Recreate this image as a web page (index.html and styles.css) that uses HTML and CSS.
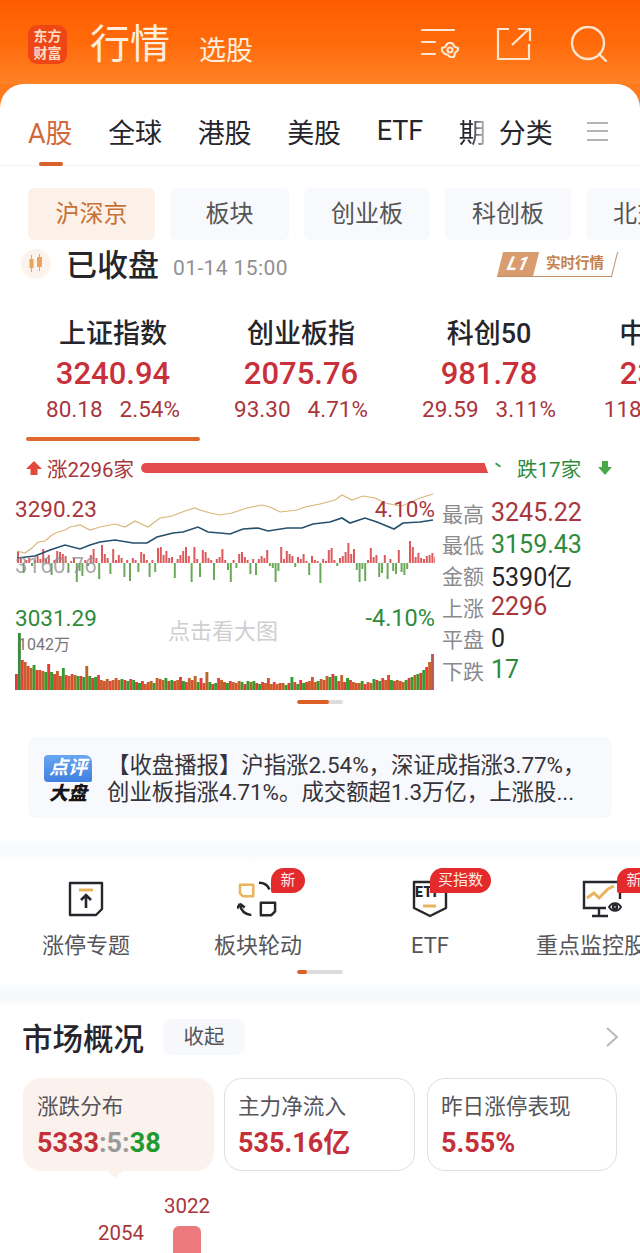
FILE: index.html
```html
<!DOCTYPE html>
<html lang="zh-CN">
<head>
    <meta charset="UTF-8">
    <meta name="viewport" content="width=device-width, initial-scale=1.0">
    <title>行情</title>
    <link rel="stylesheet" href="styles.css">
</head>
<body>
    <header class="topbar">
        <div class="logo">东方<br>财富</div>
        <h1 class="title">行情</h1>
        <span class="title-sub">选股</span>
        <div class="top-icons">
            <svg class="icon-filter" width="40" height="34" viewBox="0 0 40 34" fill="none" stroke="#fde6cf" stroke-width="2.2" stroke-linecap="round">
                <path d="M2 3h32M2 15h13M2 27h13"/>
                <path d="M22 21l3-1 3-4h4l3 4 3 1v2l-3 3-1 4h-4l-2-2-3-1-3-3z" stroke-linejoin="round"/>
                <circle cx="30" cy="23" r="2.5"/>
            </svg>
            <svg class="icon-share" width="36" height="34" viewBox="0 0 36 34" fill="none" stroke="#fde6cf" stroke-width="2.2">
                <path d="M13 2H2v30h31V17"/>
                <path d="M16 18L33 2M22 2h12v12"/>
            </svg>
            <svg class="icon-search" width="38" height="36" viewBox="0 0 38 36" fill="none" stroke="#fde6cf" stroke-width="2.4" stroke-linecap="round">
                <circle cx="18" cy="17" r="16"/>
                <path d="M29 28l7 7"/>
            </svg>
        </div>
    </header>

    <main class="panel">
        <nav class="tabs">
            <a class="tab tab-on">A股</a>
            <a class="tab">全球</a>
            <a class="tab">港股</a>
            <a class="tab">美股</a>
            <a class="tab">ETF</a>
            <a class="tab tab-fade">期</a>
            <a class="tab tab-more">分类</a>
            <span class="tab-menu"></span>
        </nav>

        <div class="subtabs">
            <a class="subtab subtab-on">沪深京</a>
            <a class="subtab subtab-short">板块</a>
            <a class="subtab">创业板</a>
            <a class="subtab">科创板</a>
            <a class="subtab">北交所</a>
        </div>

        <div class="status">
            <span class="status-icon">
                <svg width="20" height="20" viewBox="0 0 20 20" fill="#e9a35a">
                    <path d="M5 1h1v4h1.500v9H6v4H5v-4H3.500V5H5zM13 0h1v3h2v10h-2v4h-1v-4h-2V3h2z"/>
                </svg>
            </span>
            <span class="status-text">已收盘</span>
            <span class="status-time">01-14 15:00</span>
            <span class="l1-badge"><b class="l1-tag"><i>L1</i></b><span class="l1-text"><i>实时行情</i></span></span>
        </div>

        <div class="indexes">
            <div class="index index-on">
                <div class="index-name">上证指数</div>
                <div class="index-value">3240.94</div>
                <div class="index-change"><span>80.18</span><span>2.54%</span></div>
            </div>
            <div class="index">
                <div class="index-name">创业板指</div>
                <div class="index-value">2075.76</div>
                <div class="index-change"><span>93.30</span><span>4.71%</span></div>
            </div>
            <div class="index">
                <div class="index-name">科创50</div>
                <div class="index-value">981.78</div>
                <div class="index-change"><span>29.59</span><span>3.11%</span></div>
            </div>
            <div class="index">
                <div class="index-name">中证2000</div>
                <div class="index-value">2301.45</div>
                <div class="index-change"><span>118.20</span><span>5.41%</span></div>
            </div>
        </div>
        <div class="index-line"></div>

        <div class="breadth">
            <svg width="16" height="16" viewBox="0 0 16 16" fill="#e5483f"><path d="M8 1l8 8h-4.500v6h-7V9H0z"/></svg>
            <span class="up">涨2296家</span>
            <span class="breadth-bar"></span>
            <span class="breadth-tick"></span>
            <span class="down">跌17家</span>
            <svg width="14" height="16" viewBox="0 0 14 16" fill="#4aa84a"><path d="M4 1h6v6h4l-7 8-7-8h4z"/></svg>
        </div>

        <section class="overview">
            <div class="chart">
                <svg id="chart-svg" width="420" height="200" viewBox="0 0 420 200"></svg>
                <span class="chart-label top-left up">3290.23</span>
                <span class="chart-label top-right up">4.10%</span>
                <span class="chart-label mid-left">3160.76</span>
                <span class="chart-label low-left down">3031.29</span>
                <span class="chart-label low-right down">-4.10%</span>
                <span class="chart-hint">点击看大图</span>
                <span class="chart-vol">1042万</span>
            </div>
            <dl class="stats">
                <div class="stat"><dt>最高</dt><dd class="up">3245.22</dd></div>
                <div class="stat"><dt>最低</dt><dd class="down">3159.43</dd></div>
                <div class="stat"><dt>金额</dt><dd>5390亿</dd></div>
                <div class="stat"><dt>上涨</dt><dd class="up">2296</dd></div>
                <div class="stat"><dt>平盘</dt><dd>0</dd></div>
                <div class="stat"><dt>下跌</dt><dd class="down">17</dd></div>
            </dl>
        </section>
        <div class="pager"><span class="pager-fill pager-long"></span></div>

        <div class="news">
            <div class="news-logo">
                <span class="news-logo-top">点评</span>
                <span class="news-logo-bottom">大盘</span>
            </div>
            <p class="news-text">【收盘播报】沪指涨2.54%，深证成指涨3.77%，<br>创业板指涨4.71%。成交额超1.3万亿，上涨股...</p>
        </div>

        <div class="band"></div>

        <section class="shortcuts">
            <div class="shortcut-row">
                <div class="shortcut">
                    <svg width="36" height="36" viewBox="0 0 36 36" fill="none" stroke="#26262c" stroke-width="2.400">
                        <path d="M2 2h32v26l-6 6H2z" stroke-linejoin="round"/>
                        <path d="M11 9h14" stroke="#e9b45c" stroke-width="3"/>
                        <path d="M18 27V15M13 19l5-5 5 5" stroke-width="2.600"/>
                    </svg>
                    <span class="shortcut-name">涨停专题</span>
                </div>
                <div class="shortcut">
                    <svg width="42" height="40" viewBox="0 0 42 40" fill="none" stroke="#26262c" stroke-width="2.600">
                        <path d="M2 5h14v12H5l-3-3z" stroke="#e9b45c" stroke-linejoin="round"/>
                        <path d="M22 3c5 0 9 2 11 7M2 26c1 6 5 10 12 11M2 25l-3 5M2 25l5 4"/>
                        <path d="M24 24h15v9l-4 4H24z" stroke-linejoin="round"/>
                    </svg>
                    <span class="shortcut-name">板块轮动</span>
                    <span class="pop pop-new">新</span>
                </div>
                <div class="shortcut">
                    <svg width="36" height="38" viewBox="0 0 36 38" fill="none" stroke="#26262c" stroke-width="2.400">
                        <path d="M2 2h32v26l-16 8-16-8z" stroke-linejoin="round"/>
                        <path d="M11 26h13" stroke="#e9b45c" stroke-width="3"/>
                    </svg>
                    <span class="icon-etf">ETF</span>
                    <span class="shortcut-name">ETF</span>
                    <span class="pop pop-etf">买指数</span>
                </div>
                <div class="shortcut">
                    <svg width="40" height="38" viewBox="0 0 40 38" fill="none" stroke="#26262c" stroke-width="2.400">
                        <path d="M24 28H2V2h36v17"/>
                        <path d="M5 18l7-5 5 5 9-9 6-3" stroke="#e9b45c" stroke-width="3"/>
                        <path d="M17 28v7M10 36h16"/>
                        <circle cx="33" cy="27" r="2"/>
                        <path d="M27 27c3-5 9-5 12 0-3 5-9 5-12 0z" stroke-width="2"/>
                    </svg>
                    <span class="shortcut-name">重点监控股票</span>
                    <span class="pop pop-new pop-cut">新</span>
                </div>
            </div>
            <div class="pager pager-small"><span class="pager-fill pager-short"></span></div>
        </section>

        <div class="band"></div>

        <section class="market">
            <div class="market-head">
                <h2 class="market-title">市场概况</h2>
                <a class="fold">收起</a>
                <svg class="chevron" width="14" height="24" viewBox="0 0 14 24" fill="none" stroke="#b9b9bd" stroke-width="2"><path d="M2 3l10 9-10 9"/></svg>
            </div>
            <div class="cards">
                <div class="card card-on">
                    <div class="card-name">涨跌分布</div>
                    <div class="card-value"><span class="red">5333</span><span class="grey">:5:</span><span class="green">38</span></div>
                </div>
                <div class="card">
                    <div class="card-name">主力净流入</div>
                    <div class="card-value red">535.16亿</div>
                </div>
                <div class="card card-last">
                    <div class="card-name">昨日涨停表现</div>
                    <div class="card-value red">5.55%</div>
                </div>
            </div>
            <div class="dist">
                <div class="dist-col"><span class="dist-num">2054</span><span class="dist-bar dist-bar-a"></span></div>
                <div class="dist-col"><span class="dist-num">3022</span><span class="dist-bar dist-bar-b"></span></div>
            </div>
        </section>
    </main>

    <script src="chart.js"></script>
</body>
</html>
```

FILE: styles.css
```css
* {
    box-sizing: border-box;
}

html, body {
    margin: 0;
    height: 1253px;
    overflow: hidden;
}

body {
    width: 640px;
    background: #ff7a1c;
    font-family: Roboto, "Noto Sans CJK SC", sans-serif;
    color: #25252b;
}

.up { color: #a9363c; }
.down { color: #2f8a3c; }
.red { color: #c4303a; }
.grey { color: #9a9a9a; }
.green { color: #1f9a30; }

/* top bar */
.topbar {
    height: 84px;
    display: flex;
    align-items: center;
    padding: 4px 0 0 28px;
    background: linear-gradient(#ff5c02, #ff6a0a 50%, #ff8226);
    color: #fdeedd;
}

.logo {
    width: 39px;
    height: 39px;
    border-radius: 9px;
    background: #ef4616;
    color: #fbdcc0;
    font-size: 14px;
    font-weight: 700;
    line-height: 17px;
    text-align: center;
    padding-top: 3px;
}

.title {
    margin: 2px 0 0 23px;
    font-size: 40px;
    font-weight: 400;
    line-height: 50px;
}

.title-sub {
    margin: 8px 0 0 29px;
    font-size: 27px;
    font-weight: 400;
}

.top-icons {
    display: flex;
    align-items: center;
    margin-left: 167px;
}

.icon-share { margin-left: 36px; }
.icon-search { margin-left: 38px; }

/* white panel */
.panel {
    height: 1169px;
    background: #fff;
    border-radius: 24px 24px 0 0;
    overflow: hidden;
}

.tabs {
    height: 82px;
    display: flex;
    align-items: center;
    padding: 13px 0 0 28px;
    border-bottom: 1px solid #f3f3f5;
    font-size: 27px;
}

.tab {
    margin-right: 35.500px;
    white-space: nowrap;
}

.tab-on {
    color: #d2683a;
    position: relative;
}

.tab-on::after {
    content: "";
    position: absolute;
    left: 11px;
    bottom: -15px;
    width: 24px;
    height: 4px;
    border-radius: 2px;
    background: #d9602b;
}

.tab-fade {
    margin-right: 13px;
    width: 27px;
    overflow: hidden;
    background: linear-gradient(90deg, #25252b 40%, #c5c5c8);
    -webkit-background-clip: text;
    background-clip: text;
    color: transparent;
}

.tab-more {
    margin-right: 34px;
}

.tab-menu {
    width: 21px;
    height: 19px;
    border-top: 2px solid #b5b5b8;
    border-bottom: 2px solid #b5b5b8;
    position: relative;
}

.tab-menu::after {
    content: "";
    position: absolute;
    left: 0;
    right: 0;
    top: 6.500px;
    height: 2px;
    background: #b5b5b8;
}

.subtabs {
    display: flex;
    gap: 15px;
    padding: 22px 0 0 28px;
    white-space: nowrap;
    overflow: hidden;
}

.subtab {
    flex: none;
    width: 126px;
    height: 52px;
    line-height: 52px;
    border-radius: 6px;
    background: #f7f9fc;
    color: #555;
    font-size: 24px;
    text-align: center;
}

.subtab-on {
    width: 127px;
    background: #fcf1e9;
    color: #c87035;
}

.subtab-short {
    width: 119px;
}

/* market status */
.status {
    height: 32px;
    margin-top: 8px;
    padding-left: 21px;
    display: flex;
    align-items: center;
}

.status-icon {
    width: 30px;
    height: 30px;
    border-radius: 50%;
    background: #fdf3ed;
    display: flex;
    align-items: center;
    justify-content: center;
}

.status-text {
    margin: -3px 0 0 15px;
    font-size: 31px;
    font-weight: 500;
}

.status-time {
    margin: 7px 0 0 14px;
    font-size: 21px;
    letter-spacing: .4px;
    color: #909094;
}

.l1-badge {
    margin: 0 25px 0 auto;
    height: 25px;
    display: flex;
    transform: skewX(-14deg);
    border-right: 1.500px solid #c58d60;
    border-bottom: 1.500px solid #c58d60;
}

.l1-tag {
    width: 36px;
    background: #d99c6e;
    color: #fff;
    font-size: 19px;
    line-height: 24px;
    text-align: center;
}

.l1-text {
    width: 78px;
    color: #c3814c;
    font-size: 14.500px;
    font-weight: 700;
    line-height: 24px;
    text-align: center;
}

.l1-text i {
    display: inline-block;
    font-style: normal;
    transform: skewX(14deg);
}

/* index row */
.indexes {
    display: flex;
    margin-top: 36px;
    padding-left: 19px;
    overflow: hidden;
}

.index {
    flex: none;
    width: 188px;
    text-align: center;
}

.index-name {
    font-size: 27px;
    font-weight: 500;
    line-height: 36px;
    white-space: nowrap;
}

.index-value {
    margin-top: 4px;
    color: #c8303a;
    font-size: 31px;
    font-weight: 500;
    line-height: 36px;
}

.index-change {
    margin-top: 2px;
    display: flex;
    justify-content: center;
    gap: 17px;
    color: #a9363c;
    font-size: 22.500px;
    line-height: 30px;
    white-space: nowrap;
}

.index-line {
    width: 174px;
    height: 4px;
    margin: 13px 0 0 26px;
    border-radius: 2px;
    background: #e0682f;
}

/* up / down breadth */
.breadth {
    height: 24px;
    margin-top: 15px;
    padding-left: 26px;
    display: flex;
    align-items: center;
    font-size: 20.500px;
}

.breadth .up {
    margin-left: 5px;
}

.breadth-bar {
    width: 347px;
    height: 10px;
    margin-left: 7px;
    border-radius: 5px 0 0 5px;
    background: #e24a4c;
    clip-path: polygon(0 0, 99% 0, 100% 100%, 0 100%);
}

.breadth-tick {
    width: 6px;
    height: 2px;
    margin: -6px 0 0 7px;
    background: #3f9b4a;
    transform: rotate(35deg);
}

.breadth .down {
    margin: 0 17px 0 16px;
}

/* chart + stats */
.overview {
    display: flex;
    margin-top: 10px;
}

.chart {
    position: relative;
    width: 420px;
    height: 200px;
    margin-left: 15px;
    flex: none;
}

.chart svg {
    display: block;
}

.chart-label {
    position: absolute;
    font-size: 22.500px;
    line-height: 26px;
    white-space: nowrap;
}

.top-left { left: 0; top: 6px; }
.top-right { right: 0; top: 6px; }
.mid-left { left: 0; top: 62px; color: #8f8f93; opacity: .75; }
.low-left { left: 0; top: 115px; }
.low-right { right: 0; top: 115px; font-size: 23.500px; }

.chart-hint {
    position: absolute;
    left: 153px;
    top: 129px;
    color: #cfcfd1;
    font-size: 22px;
    line-height: 26px;
}

.chart-vol {
    position: absolute;
    left: 3px;
    top: 145px;
    color: #77777b;
    font-size: 16px;
    line-height: 20px;
}

.stats {
    margin: 7px 0 0 7px;
}

.stat {
    height: 31.400px;
    display: flex;
    align-items: center;
}

.stat dt {
    width: 49px;
    color: #8a8a8e;
    font-size: 21px;
}

.stat dd {
    margin: 0;
    font-size: 25px;
}

/* pager */
.pager {
    width: 46px;
    height: 4px;
    margin: 10px 0 0 297px;
    border-radius: 2px;
    background: #dcdcdf;
    overflow: hidden;
}

.pager-fill {
    display: block;
    height: 4px;
    border-radius: 2px;
    background: #dd5f28;
}

.pager-long { width: 32px; }
.pager-short { width: 10px; }

/* news */
.news {
    height: 81px;
    margin: 33px 28px 0;
    padding: 16px 0 0 16px;
    display: flex;
    border-radius: 8px;
    background: #f8f9fc;
}

.news-logo {
    width: 48px;
    flex: none;
    text-align: center;
}

.news-logo-top {
    display: block;
    height: 27px;
    margin-top: 2px;
    border-radius: 4px 7px 2px 4px;
    background: linear-gradient(#6aa6ef, #3f7fe0);
    color: #fff;
    font-size: 19px;
    font-style: italic;
    font-weight: 700;
    line-height: 26px;
}

.news-logo-bottom {
    display: block;
    color: #16161a;
    font-size: 19px;
    font-style: italic;
    font-weight: 900;
    line-height: 24px;
}

.news-text {
    margin: -1px 0 0 15px;
    color: #34343a;
    font-size: 22.400px;
    line-height: 27px;
    white-space: nowrap;
}

.band {
    height: 20px;
    background: linear-gradient(#fbfcfe, #f6f8fb 60%, #fdfdfe);
}

.news + .band {
    margin-top: 22px;
}

/* shortcuts */
.shortcuts {
    height: 125px;
}

.shortcut-row {
    display: flex;
}

.shortcut {
    position: relative;
    flex: none;
    width: 172px;
    height: 110px;
    display: flex;
    flex-direction: column;
    align-items: center;
    padding-top: 20px;
}

.shortcut svg {
    height: 38px;
    flex: none;
}

.shortcut-name {
    margin-top: 12px;
    color: #55555a;
    font-size: 22px;
    line-height: 32px;
    white-space: nowrap;
}

.pop {
    position: absolute;
    top: 8px;
    height: 25px;
    border-radius: 13px 13px 13px 2px;
    background: #e42a2c;
    color: #fde8e2;
    font-size: 15px;
    line-height: 25px;
    text-align: center;
}

.pop-new {
    left: 99px;
    width: 34px;
}

.pop-cut {
    left: 101px;
}

.pop-etf {
    left: 86px;
    width: 61px;
    border-radius: 13px 13px 13px 0;
}

.icon-etf {
    position: absolute;
    left: 71px;
    top: 24px;
    font-size: 14px;
    font-weight: 900;
    letter-spacing: .5px;
}

.pager-small {
    margin-top: 0;
}

/* market overview */
.market {
    padding: 14px 21px 0 22px;
}

.market-head {
    height: 36px;
    display: flex;
    align-items: center;
}

.market-title {
    margin: 0;
    font-size: 30.500px;
    font-weight: 500;
}

.fold {
    width: 82px;
    height: 36px;
    margin-left: 19px;
    border-radius: 10px;
    background: #f6f8fc;
    color: #55555a;
    font-size: 20.500px;
    line-height: 36px;
    text-align: center;
}

.chevron {
    margin-left: auto;
}

.cards {
    display: flex;
    gap: 10px;
    margin: 23px 0 0 1px;
}

.card {
    position: relative;
    flex: none;
    width: 191px;
    height: 93px;
    padding: 13px 13px 0;
    border: 1px solid #dedee2;
    border-radius: 18px;
}

.card-last {
    width: 190px;
    margin-left: 2px;
}

.card-on {
    border-color: #fcf2ed;
    background: #fcf2ed;
}

.card-on::after {
    content: "";
    position: absolute;
    left: 82px;
    bottom: -8px;
    border-left: 9px solid transparent;
    border-right: 9px solid transparent;
    border-top: 8px solid #fcf2ed;
}

.card-name {
    color: #55555a;
    font-size: 21.600px;
    line-height: 30px;
    white-space: nowrap;
}

.card-value {
    margin-top: 5px;
    font-size: 27px;
    font-weight: 700;
    line-height: 32px;
    white-space: nowrap;
}

.dist {
    height: 120px;
    margin-top: 23px;
    padding-left: 66px;
    display: flex;
    align-items: flex-end;
}

.dist-col {
    width: 66px;
    display: flex;
    flex-direction: column;
    align-items: center;
    gap: 8px;
}

.dist-num {
    color: #a9363c;
    font-size: 20.500px;
    line-height: 24px;
}

.dist-bar {
    width: 28px;
    border-radius: 6px 6px 0 0;
    background: #ec7a7c;
}

.dist-bar-a { height: 61px; }
.dist-bar-b { height: 88px; }
```

FILE: chart.js
```js
// intraday chart, coordinates are relative to the chart box (page x - 15, page y - 490)
const ns = 'http://www.w3.org/2000/svg';
const svg = document.getElementById('chart-svg');

const gold = [[2,61],[10,63],[17,58],[23,52],[30,51],[37,45],[43,42],[50,40],[55,37],[65,35],[75,40],[85,37],[100,34],[110,37],[120,31],[133,37],[145,28],[157,26],[170,21],[180,18],[185,20],[195,23],[205,25],[217,23],[232,18],[247,15],[255,17],[265,22],[282,20],[290,17],[305,14],[320,10],[327,5],[337,10],[348,6],[360,8],[370,13],[380,15],[387,16],[405,8],[418,4]];
const blue = [[2,68],[20,66],[35,60],[50,55],[65,59],[75,55],[85,52],[100,50],[118,53],[132,53],[142,47],[158,43],[168,42],[183,37],[193,42],[205,43],[215,44],[228,39],[243,38],[253,41],[272,38],[287,38],[298,34],[315,32],[327,28],[335,33],[350,28],[362,32],[379,39],[388,33],[405,32],[418,30]];

// money flow per bar, + goes up (red), - goes down (green)
const flow = [12,6,-10,3,5,-3,3,7,4,14,4,8,-12,3,12,11,9,7,-9,2,5,-19,-8,-13,3,-3,8,14,5,-16,18,9,5,-11,14,3,8,5,-14,3,-18,5,3,-9,11,9,3,-14,3,-9,15,16,8,12,5,6,-15,4,8,12,16,7,-19,16,4,-14,13,11,5,3,-17,4,6,14,3,-7,-19,3,-5,9,11,6,3,-11,4,-12,4,7,5,13,-3,-5,-19,-8,16,4,12,9,7,-4,6,4,9,2,-12,7,3,2,-20,4,2,13,15,3,-3,5,7,11,20,9,14,-7,-19,-6,-18,3,15,6,8,-14,-10,8,-16,4,-8,-11,13,-9,-12,-6,22,16,6,10,5,4,7,8,10,6,2];
const vol = [16,57,30,28,24,22,25,20,20,19,18,26,18,16,19,14,22,15,14,16,15,14,14,13,24,14,12,13,15,10,9,11,9,10,12,10,11,10,9,11,10,8,7,9,6,8,9,7,12,11,10,12,9,10,9,10,13,9,8,12,10,14,8,12,7,18,8,6,7,12,10,8,7,9,8,7,9,8,6,9,8,9,7,6,8,7,12,6,8,6,7,7,5,7,13,8,6,10,7,8,9,13,8,9,11,10,14,13,16,14,9,15,8,12,10,8,7,7,9,6,8,7,11,10,9,12,10,15,10,9,10,9,8,10,12,13,15,16,17,20,23,28,36];

function add(tag, attrs) {
    const el = document.createElementNS(ns, tag);
    for (const k in attrs) el.setAttribute(k, attrs[k]);
    svg.appendChild(el);
}

flow.forEach((v, i) => {
    const x = 2 + i * 2.8;
    const h = Math.abs(v);
    add('rect', {
        x: x, y: v > 0 ? 73 - h : 73, width: 2, height: h,
        fill: v > 0 ? '#dd5a5c' : '#6aa85a'
    });
});

const palette = ['#e8393a', '#c8622c', '#3a9a2c', '#ee3f3f', '#b8662a', '#2f9e2f', '#d9502f'];
vol.forEach((v, i) => {
    const x = i * 2.93;
    const last = i === vol.length - 1;
    add('rect', {
        x: x, y: 200 - v, width: 2.9, height: v,
        fill: last ? '#b85a5a' : i === 1 ? '#3d8a3c' : palette[(i * 5 + (i >> 3)) % 7]
    });
});

add('polyline', { points: gold.join(' '), fill: 'none', stroke: '#d9b679', 'stroke-width': 1.2 });
add('polyline', { points: blue.join(' '), fill: 'none', stroke: '#26506e', 'stroke-width': 1.6 });
```
